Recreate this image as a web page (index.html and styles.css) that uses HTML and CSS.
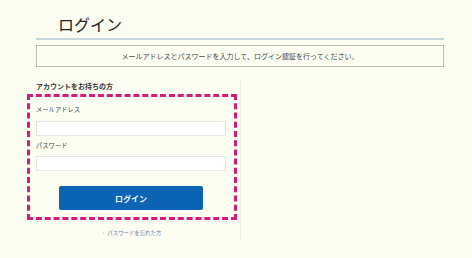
FILE: index.html
```html
<!DOCTYPE html>
<html lang="ja">
<head>
  <meta charset="UTF-8">
  <title>ログイン</title>
  <link rel="stylesheet" href="styles.css">
</head>
<body>
  <div class="page">
    <h1 class="title">ログイン</h1>
    <p class="notice">メールアドレスとパスワードを入力して、ログイン認証を行ってください。</p>

    <div class="column">
      <h2 class="heading">アカウントをお持ちの方</h2>
      <form class="login-form">
        <label class="label" for="email">メールアドレス</label>
        <input class="field" type="text" id="email">
        <label class="label" for="password">パスワード</label>
        <input class="field last" type="password" id="password">
        <button class="submit" type="button">ログイン</button>
      </form>
      <a class="forgot" href="#"><span class="arrow">›</span>パスワードを忘れた方</a>
    </div>
  </div>
</body>
</html>
```

FILE: styles.css
```css
:root {
  --bg: #fdfef2;
  --text: #222222;
  --line: #c6d7db;
  --box-border: #bdbdb4;
  --highlight: #d8197c;
  --button: #0b64b4;
  --link: #5b7cad;
}

body {
  margin: 0;
  background: var(--bg);
  color: var(--text);
  font-family: "Noto Sans CJK JP", "Noto Sans", sans-serif;
}

.page {
  width: 408px;
  padding: 0 0 0 36px;
}

.title {
  margin: 0;
  padding: 13px 0 3px 22px;
  font-size: 16px;
  font-weight: normal;
  line-height: 22px;
  border-bottom: 2px solid var(--line);
}

.notice {
  margin: 5px 0 0;
  height: 20px;
  line-height: 20px;
  border: 1px solid var(--box-border);
  text-align: center;
  font-size: 7px;
  color: #444;
}

.column {
  width: 204px;
  margin-top: 13px;
  height: 160px;
  border-right: 1px solid #eef0e2;
}

.heading {
  margin: 0;
  font-size: 7px;
  line-height: 12px;
  font-weight: bold;
  color: #333;
}

.login-form {
  box-sizing: border-box;
  margin: 2px 0 0 -9px;
  width: 210px;
  padding: 8px 8px 7px 6px;
  border: 3px dashed var(--highlight);
  display: flex;
  flex-direction: column;
}

.label {
  font-size: 6.3px;
  line-height: 10px;
  color: #444;
}

.field {
  margin: 6px 0 5px;
  height: 15px;
  box-sizing: border-box;
  border: 1px solid #e4e4e0;
  background: #ffffff;
  padding: 0 4px;
}

.field.last {
  margin: 5px 0 15px;
}

.submit {
  align-self: center;
  width: 144px;
  height: 24px;
  border: none;
  border-radius: 2px;
  background: var(--button);
  color: #ffffff;
  font-family: inherit;
  font-size: 8px;
  font-weight: bold;
}

.forgot {
  display: block;
  margin: 8px 0 0 -9px;
  width: 210px;
  text-align: center;
  font-size: 5.4px;
  line-height: 10px;
  color: var(--link);
  text-decoration: none;
}

.arrow {
  margin-right: 3px;
  color: #9aa8c0;
}
```
